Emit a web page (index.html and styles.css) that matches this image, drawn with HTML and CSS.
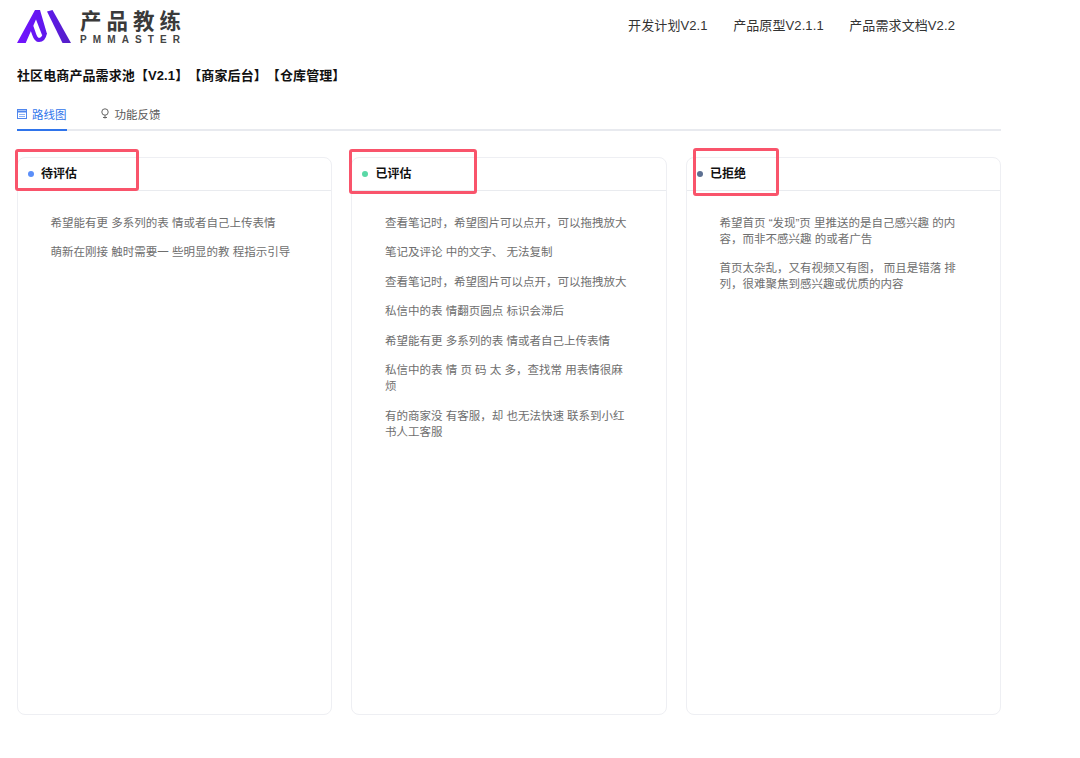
FILE: index.html
```html
<!DOCTYPE html>
<html lang="zh-CN">
<head>
<meta charset="utf-8">
<title>产品教练</title>
<link rel="stylesheet" href="styles.css">
</head>
<body>
<header class="topbar">
  <div class="brand">
    <svg class="brand-mark" width="54" height="33" viewBox="0 0 54 33" aria-hidden="true">
      <defs>
        <linearGradient id="logoGrad" gradientUnits="userSpaceOnUse" x1="0" y1="0" x2="54" y2="0">
          <stop offset="0" stop-color="#7413ff"/>
          <stop offset="0.55" stop-color="#5f18ec"/>
          <stop offset="1" stop-color="#5420c4"/>
        </linearGradient>
      </defs>
      <path fill="url(#logoGrad)" d="M0 33 L18 0 L23 0 L30 24 L25 25 L19 9.500 L8.700 33 Z"/>
      <path fill="none" stroke="url(#logoGrad)" stroke-width="4" d="M13.500 14 L17 24 C18.500 28.500 20 30 22 30 C25 30 27 28 28 23"/>
      <path fill="url(#logoGrad)" d="M30 1.500 L35.500 0 L54 33 L45.500 33 Z"/>
    </svg>
    <div class="brand-text">
      <span class="brand-name">产品教练</span>
      <span class="brand-sub">PMMASTER</span>
    </div>
  </div>
  <nav class="topnav">
    <a class="topnav-link">开发计划V2.1</a>
    <a class="topnav-link">产品原型V2.1.1</a>
    <a class="topnav-link">产品需求文档V2.2</a>
  </nav>
</header>

<main class="content">
  <h1 class="page-title">社区电商产品需求池【V2.1】【商家后台】【仓库管理】</h1>

  <div class="tabs">
    <div class="tab tab-active">
      <svg class="tab-icon" width="10" height="10" viewBox="0 0 10 10" aria-hidden="true">
        <rect x="0.500" y="0.500" width="9" height="9" fill="none" stroke="#4f86ee"/>
        <path d="M0.500 2.500H9.500" stroke="#4f86ee" stroke-width="2" fill="none"/>
        <path d="M2 5.500H8M2 7.500H8" stroke="#8fb2f4" fill="none"/>
      </svg>
      <span>路线图</span>
    </div>
    <div class="tab">
      <svg class="tab-icon" width="10" height="11" viewBox="0 0 10 11" aria-hidden="true">
        <circle cx="5" cy="4" r="3.200" fill="none" stroke="#666"/>
        <path d="M5 7.200V10.500M3 9.500H7" stroke="#666" fill="none"/>
      </svg>
      <span>功能反馈</span>
    </div>
  </div>

  <div class="board">
    <section class="card">
      <div class="card-head"><i class="dot dot-blue"></i><h2 class="card-title">待评估</h2></div>
      <div class="card-body">
        <p class="item">希望能有更 多系列的表 情或者自己上传表情</p>
        <p class="item">萌新在刚接 触时需要一 些明显的教 程指示引导</p>
      </div>
      <div class="mark mark-one"></div>
    </section>

    <section class="card">
      <div class="card-head"><i class="dot dot-green"></i><h2 class="card-title">已评估</h2></div>
      <div class="card-body">
        <p class="item">查看笔记时，希望图片可以点开，可以拖拽放大</p>
        <p class="item">笔记及评论 中的文字、 无法复制</p>
        <p class="item">查看笔记时，希望图片可以点开，可以拖拽放大</p>
        <p class="item">私信中的表 情翻页圆点 标识会滞后</p>
        <p class="item">希望能有更 多系列的表 情或者自己上传表情</p>
        <p class="item">私信中的表 情 页 码 太 多，查找常 用表情很麻烦</p>
        <p class="item">有的商家没 有客服，却 也无法快速 联系到小红书人工客服</p>
      </div>
      <div class="mark mark-two"></div>
    </section>

    <section class="card">
      <div class="card-head"><i class="dot dot-slate"></i><h2 class="card-title">已拒绝</h2></div>
      <div class="card-body">
        <p class="item">希望首页 “发现”页 里推送的是自己感兴趣 的内容，而非不感兴趣 的或者广告</p>
        <p class="item">首页太杂乱，又有视频又有图， 而且是错落 排列，很难聚焦到感兴趣或优质的内容</p>
      </div>
      <div class="mark mark-three"></div>
    </section>
  </div>
</main>
</body>
</html>
```

FILE: styles.css
```css
* {
  box-sizing: border-box;
}

html,
body {
  margin: 0;
  padding: 0;
  background: #fff;
}

body {
  width: 1080px;
  height: 758px;
  overflow: hidden;
  font-family: "Liberation Sans", "Noto Sans CJK SC", sans-serif;
  color: #333;
  text-spacing-trim: space-all;
}

.topbar {
  display: flex;
  align-items: flex-start;
  justify-content: space-between;
  height: 60px;
  padding: 10px 125px 0 17px;
}

.brand {
  display: flex;
  gap: 9px;
}

.brand-mark {
  display: block;
}

.brand-text {
  display: flex;
  flex-direction: column;
  width: 102px;
}

.brand-name {
  font-size: 21.500px;
  line-height: 24px;
  letter-spacing: 5px;
  font-weight: 700;
  color: #3a3a3a;
  white-space: nowrap;
}

.brand-sub {
  margin-top: 1px;
  font-size: 10px;
  line-height: 10px;
  font-weight: 700;
  letter-spacing: 6.100px;
  color: #444;
  white-space: nowrap;
}

.topnav {
  display: flex;
  gap: 25.500px;
  padding-top: 7px;
}

.topnav-link {
  font-size: 13px;
  line-height: 18px;
  letter-spacing: 0.100px;
  color: #333;
  white-space: nowrap;
}

.content {
  padding: 0 79px 0 17px;
}

.page-title {
  margin: 7px 0 0;
  font-size: 13px;
  line-height: 18px;
  font-weight: 700;
  letter-spacing: 0.100px;
  color: #111;
  white-space: nowrap;
}

.tabs {
  display: flex;
  gap: 33px;
  height: 34px;
  margin-top: 12px;
  border-bottom: 2px solid #e8eaef;
}

.tab {
  display: flex;
  align-items: center;
  gap: 5px;
  height: 34px;
  padding-top: 1px;
  border-bottom: 2px solid transparent;
  font-size: 11.500px;
  color: #595959;
}

.tab-active {
  color: #2f74eb;
  border-bottom-color: #2f74eb;
}

.tab-icon {
  display: block;
  flex: none;
}

.board {
  display: grid;
  grid-template-columns: repeat(3, 1fr);
  gap: 19.330px;
  margin-top: 26px;
}

.card {
  position: relative;
  height: 558px;
  border: 1px solid #eeeff3;
  border-radius: 8px;
}

.card-head {
  display: flex;
  align-items: center;
  gap: 7px;
  height: 33px;
  padding-left: 10px;
  border-bottom: 1px solid #e9ebef;
}

.dot {
  display: block;
  width: 6px;
  height: 6px;
  border-radius: 50%;
}

.dot-blue {
  background: #5b8ff9;
}

.dot-green {
  background: #5ad8a6;
}

.dot-slate {
  background: #5d7092;
}

.card-title {
  margin: 0;
  font-size: 12px;
  line-height: 16px;
  font-weight: 700;
  color: #111;
}

.card-body {
  width: 277px;
  padding: 23.500px 0 0 32.600px;
}

.item {
  margin: 0 0 13.500px;
  font-size: 11.500px;
  line-height: 16px;
  color: #6e6e6e;
}

.mark {
  position: absolute;
  top: -9px;
  border: 3px solid #f9546b;
  border-radius: 3px;
  pointer-events: none;
}

.mark-one {
  left: -3px;
  width: 124px;
  height: 42px;
}

.mark-two {
  left: -3px;
  width: 128px;
  height: 45px;
}

.mark-three {
  left: 6px;
  top: -10px;
  width: 86px;
  height: 48px;
}
```
